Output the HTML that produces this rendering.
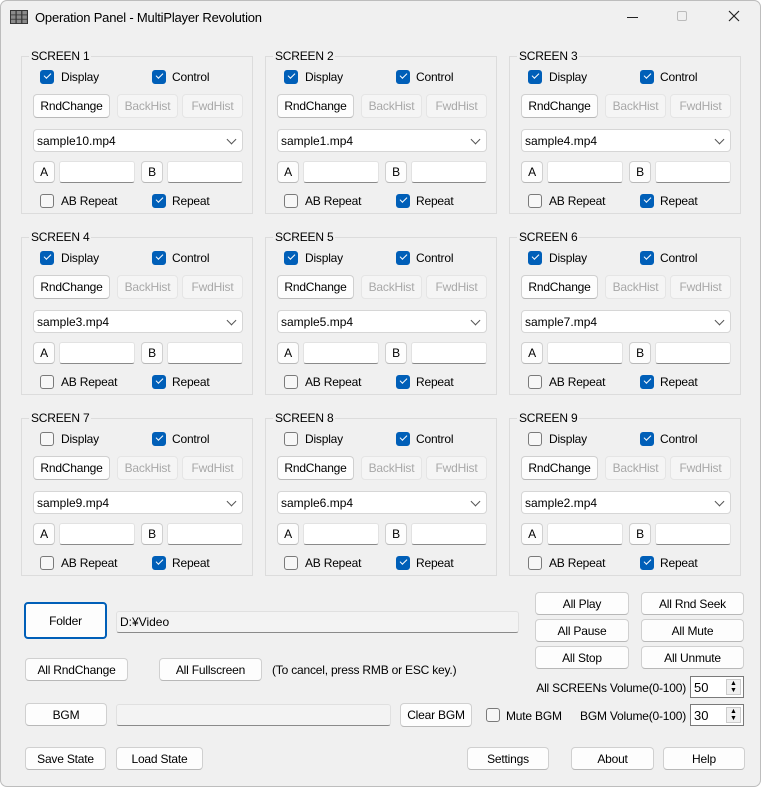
<!DOCTYPE html><html><head><meta charset="utf-8"><style>
*{box-sizing:border-box;margin:0;padding:0}
body{width:761px;height:787px;background:#fff;font-family:"Liberation Sans",sans-serif;font-size:12px;color:#000;overflow:hidden;position:relative}
.win{position:absolute;left:0;top:0;width:761px;height:787px;background:#f0f0f0;border-radius:7px;overflow:hidden;box-shadow:inset 0 0 0 1px #bdbdbd}
.a{position:absolute}
.g{position:absolute;width:232px;height:164px}
.g .bx{position:absolute;left:0;top:6px;width:232px;height:158px;border:1px solid #dcdcdc}
.t{position:absolute;white-space:nowrap;line-height:14px;letter-spacing:-0.2px}
.r{text-align:right}
.cb{position:absolute;width:14px;height:14px;border-radius:3px;border:1px solid #7a7a7a;background:#f7f7f7}
.cb.on{background:#005fb8;border-color:#005fb8}
.cb.on:after{content:"";position:absolute;left:3px;top:2px;width:6px;height:3px;border-left:1.5px solid #fff;border-bottom:1.5px solid #fff;transform:rotate(-45deg)}
.b{position:absolute;background:#fdfdfd;border:1px solid #d0d0d0;border-bottom-color:#b8b8b8;border-radius:4px;text-align:center;white-space:nowrap;display:flex;align-items:center;justify-content:center;letter-spacing:-0.2px}
.b.d{background:#f5f5f5;color:#a8a8a8;border-color:#e5e5e5}
.tb{position:absolute;background:#fff;border:1px solid #e2e2e2;border-bottom:1px solid #8a8a8a;border-radius:3px}
.cmb{position:absolute;background:#fff;border:1px solid #d6d6d6;border-radius:4px;padding-left:3px;display:flex;align-items:center}
.cmb:after{content:"";position:absolute;right:7px;top:6px;width:6px;height:6px;border-right:1px solid #555;border-bottom:1px solid #555;transform:rotate(45deg)}
.ro{position:absolute;background:#f3f3f3;border:1px solid #e0e0e0;border-bottom:1px solid #8a8a8a;border-radius:3px;padding-left:3px;display:flex;align-items:center}
.sp{position:absolute;width:54px;height:22px;background:#fff;border:1px solid #7a7a7a;padding-left:3px;display:flex;align-items:center;font-size:13px}
.sp i{position:absolute;right:2px;top:2px;width:15px;height:16px;border:1px solid #ccc;background:#f0f0f0;font-style:normal;font-size:7px;line-height:7px;text-align:center}
</style></head><body><div class="win">
<svg class="a" style="left:10px;top:10px" width="18" height="14"><rect width="18" height="14" fill="#333"/><g fill="#8b8b8b"><rect x="1" y="1" width="4.5" height="3.5"/><rect x="6.7" y="1" width="4.5" height="3.5"/><rect x="12.4" y="1" width="4.5" height="3.5"/><rect x="1" y="5.3" width="4.5" height="3.5"/><rect x="6.7" y="5.3" width="4.5" height="3.5"/><rect x="12.4" y="5.3" width="4.5" height="3.5"/><rect x="1" y="9.6" width="4.5" height="3.5"/><rect x="6.7" y="9.6" width="4.5" height="3.5"/><rect x="12.4" y="9.6" width="4.5" height="3.5"/></g></svg>
<div class="t" style="left:35px;top:11px;font-size:13px">Operation Panel - MultiPlayer Revolution</div>
<div class="a" style="left:627px;top:17px;width:11px;height:1px;background:#222"></div>
<div class="a" style="left:677px;top:11px;width:10px;height:10px;border:1px solid #bbb;border-radius:2px"></div>
<svg class="a" style="left:728px;top:10px" width="12" height="12"><path d="M1 1L11 11M11 1L1 11" stroke="#222" stroke-width="1.2"/></svg>

<div class="g" style="left:21px;top:50px"><div class="bx"></div><div class="t" style="left:8px;top:-1px;padding:0 2px;background:#f0f0f0">SCREEN 1</div><div class="cb on" style="left:19px;top:20px"></div><div class="t" style="left:40px;top:20px">Display</div><div class="cb on" style="left:131px;top:20px"></div><div class="t" style="left:151px;top:20px">Control</div><div class="b" style="left:12px;top:44px;width:77px;height:24px">RndChange</div><div class="b d" style="left:96px;top:44px;width:61px;height:24px">BackHist</div><div class="b d" style="left:161px;top:44px;width:61px;height:24px">FwdHist</div><div class="cmb" style="left:12px;top:79px;width:210px;height:23px">sample10.mp4</div><div class="b" style="left:12px;top:111px;width:22px;height:22px">A</div><div class="tb" style="left:38px;top:111px;width:76px;height:22px"></div><div class="b" style="left:120px;top:111px;width:22px;height:22px">B</div><div class="tb" style="left:146px;top:111px;width:76px;height:22px"></div><div class="cb" style="left:19px;top:144px"></div><div class="t" style="left:40px;top:144px">AB Repeat</div><div class="cb on" style="left:131px;top:144px"></div><div class="t" style="left:151px;top:144px">Repeat</div></div>
<div class="g" style="left:265px;top:50px"><div class="bx"></div><div class="t" style="left:8px;top:-1px;padding:0 2px;background:#f0f0f0">SCREEN 2</div><div class="cb on" style="left:19px;top:20px"></div><div class="t" style="left:40px;top:20px">Display</div><div class="cb on" style="left:131px;top:20px"></div><div class="t" style="left:151px;top:20px">Control</div><div class="b" style="left:12px;top:44px;width:77px;height:24px">RndChange</div><div class="b d" style="left:96px;top:44px;width:61px;height:24px">BackHist</div><div class="b d" style="left:161px;top:44px;width:61px;height:24px">FwdHist</div><div class="cmb" style="left:12px;top:79px;width:210px;height:23px">sample1.mp4</div><div class="b" style="left:12px;top:111px;width:22px;height:22px">A</div><div class="tb" style="left:38px;top:111px;width:76px;height:22px"></div><div class="b" style="left:120px;top:111px;width:22px;height:22px">B</div><div class="tb" style="left:146px;top:111px;width:76px;height:22px"></div><div class="cb" style="left:19px;top:144px"></div><div class="t" style="left:40px;top:144px">AB Repeat</div><div class="cb on" style="left:131px;top:144px"></div><div class="t" style="left:151px;top:144px">Repeat</div></div>
<div class="g" style="left:509px;top:50px"><div class="bx"></div><div class="t" style="left:8px;top:-1px;padding:0 2px;background:#f0f0f0">SCREEN 3</div><div class="cb on" style="left:19px;top:20px"></div><div class="t" style="left:40px;top:20px">Display</div><div class="cb on" style="left:131px;top:20px"></div><div class="t" style="left:151px;top:20px">Control</div><div class="b" style="left:12px;top:44px;width:77px;height:24px">RndChange</div><div class="b d" style="left:96px;top:44px;width:61px;height:24px">BackHist</div><div class="b d" style="left:161px;top:44px;width:61px;height:24px">FwdHist</div><div class="cmb" style="left:12px;top:79px;width:210px;height:23px">sample4.mp4</div><div class="b" style="left:12px;top:111px;width:22px;height:22px">A</div><div class="tb" style="left:38px;top:111px;width:76px;height:22px"></div><div class="b" style="left:120px;top:111px;width:22px;height:22px">B</div><div class="tb" style="left:146px;top:111px;width:76px;height:22px"></div><div class="cb" style="left:19px;top:144px"></div><div class="t" style="left:40px;top:144px">AB Repeat</div><div class="cb on" style="left:131px;top:144px"></div><div class="t" style="left:151px;top:144px">Repeat</div></div>

<div class="g" style="left:21px;top:231px"><div class="bx"></div><div class="t" style="left:8px;top:-1px;padding:0 2px;background:#f0f0f0">SCREEN 4</div><div class="cb on" style="left:19px;top:20px"></div><div class="t" style="left:40px;top:20px">Display</div><div class="cb on" style="left:131px;top:20px"></div><div class="t" style="left:151px;top:20px">Control</div><div class="b" style="left:12px;top:44px;width:77px;height:24px">RndChange</div><div class="b d" style="left:96px;top:44px;width:61px;height:24px">BackHist</div><div class="b d" style="left:161px;top:44px;width:61px;height:24px">FwdHist</div><div class="cmb" style="left:12px;top:79px;width:210px;height:23px">sample3.mp4</div><div class="b" style="left:12px;top:111px;width:22px;height:22px">A</div><div class="tb" style="left:38px;top:111px;width:76px;height:22px"></div><div class="b" style="left:120px;top:111px;width:22px;height:22px">B</div><div class="tb" style="left:146px;top:111px;width:76px;height:22px"></div><div class="cb" style="left:19px;top:144px"></div><div class="t" style="left:40px;top:144px">AB Repeat</div><div class="cb on" style="left:131px;top:144px"></div><div class="t" style="left:151px;top:144px">Repeat</div></div>
<div class="g" style="left:265px;top:231px"><div class="bx"></div><div class="t" style="left:8px;top:-1px;padding:0 2px;background:#f0f0f0">SCREEN 5</div><div class="cb on" style="left:19px;top:20px"></div><div class="t" style="left:40px;top:20px">Display</div><div class="cb on" style="left:131px;top:20px"></div><div class="t" style="left:151px;top:20px">Control</div><div class="b" style="left:12px;top:44px;width:77px;height:24px">RndChange</div><div class="b d" style="left:96px;top:44px;width:61px;height:24px">BackHist</div><div class="b d" style="left:161px;top:44px;width:61px;height:24px">FwdHist</div><div class="cmb" style="left:12px;top:79px;width:210px;height:23px">sample5.mp4</div><div class="b" style="left:12px;top:111px;width:22px;height:22px">A</div><div class="tb" style="left:38px;top:111px;width:76px;height:22px"></div><div class="b" style="left:120px;top:111px;width:22px;height:22px">B</div><div class="tb" style="left:146px;top:111px;width:76px;height:22px"></div><div class="cb" style="left:19px;top:144px"></div><div class="t" style="left:40px;top:144px">AB Repeat</div><div class="cb on" style="left:131px;top:144px"></div><div class="t" style="left:151px;top:144px">Repeat</div></div>
<div class="g" style="left:509px;top:231px"><div class="bx"></div><div class="t" style="left:8px;top:-1px;padding:0 2px;background:#f0f0f0">SCREEN 6</div><div class="cb on" style="left:19px;top:20px"></div><div class="t" style="left:40px;top:20px">Display</div><div class="cb on" style="left:131px;top:20px"></div><div class="t" style="left:151px;top:20px">Control</div><div class="b" style="left:12px;top:44px;width:77px;height:24px">RndChange</div><div class="b d" style="left:96px;top:44px;width:61px;height:24px">BackHist</div><div class="b d" style="left:161px;top:44px;width:61px;height:24px">FwdHist</div><div class="cmb" style="left:12px;top:79px;width:210px;height:23px">sample7.mp4</div><div class="b" style="left:12px;top:111px;width:22px;height:22px">A</div><div class="tb" style="left:38px;top:111px;width:76px;height:22px"></div><div class="b" style="left:120px;top:111px;width:22px;height:22px">B</div><div class="tb" style="left:146px;top:111px;width:76px;height:22px"></div><div class="cb" style="left:19px;top:144px"></div><div class="t" style="left:40px;top:144px">AB Repeat</div><div class="cb on" style="left:131px;top:144px"></div><div class="t" style="left:151px;top:144px">Repeat</div></div>

<div class="g" style="left:21px;top:412px"><div class="bx"></div><div class="t" style="left:8px;top:-1px;padding:0 2px;background:#f0f0f0">SCREEN 7</div><div class="cb" style="left:19px;top:20px"></div><div class="t" style="left:40px;top:20px">Display</div><div class="cb on" style="left:131px;top:20px"></div><div class="t" style="left:151px;top:20px">Control</div><div class="b" style="left:12px;top:44px;width:77px;height:24px">RndChange</div><div class="b d" style="left:96px;top:44px;width:61px;height:24px">BackHist</div><div class="b d" style="left:161px;top:44px;width:61px;height:24px">FwdHist</div><div class="cmb" style="left:12px;top:79px;width:210px;height:23px">sample9.mp4</div><div class="b" style="left:12px;top:111px;width:22px;height:22px">A</div><div class="tb" style="left:38px;top:111px;width:76px;height:22px"></div><div class="b" style="left:120px;top:111px;width:22px;height:22px">B</div><div class="tb" style="left:146px;top:111px;width:76px;height:22px"></div><div class="cb" style="left:19px;top:144px"></div><div class="t" style="left:40px;top:144px">AB Repeat</div><div class="cb on" style="left:131px;top:144px"></div><div class="t" style="left:151px;top:144px">Repeat</div></div>
<div class="g" style="left:265px;top:412px"><div class="bx"></div><div class="t" style="left:8px;top:-1px;padding:0 2px;background:#f0f0f0">SCREEN 8</div><div class="cb" style="left:19px;top:20px"></div><div class="t" style="left:40px;top:20px">Display</div><div class="cb on" style="left:131px;top:20px"></div><div class="t" style="left:151px;top:20px">Control</div><div class="b" style="left:12px;top:44px;width:77px;height:24px">RndChange</div><div class="b d" style="left:96px;top:44px;width:61px;height:24px">BackHist</div><div class="b d" style="left:161px;top:44px;width:61px;height:24px">FwdHist</div><div class="cmb" style="left:12px;top:79px;width:210px;height:23px">sample6.mp4</div><div class="b" style="left:12px;top:111px;width:22px;height:22px">A</div><div class="tb" style="left:38px;top:111px;width:76px;height:22px"></div><div class="b" style="left:120px;top:111px;width:22px;height:22px">B</div><div class="tb" style="left:146px;top:111px;width:76px;height:22px"></div><div class="cb" style="left:19px;top:144px"></div><div class="t" style="left:40px;top:144px">AB Repeat</div><div class="cb on" style="left:131px;top:144px"></div><div class="t" style="left:151px;top:144px">Repeat</div></div>
<div class="g" style="left:509px;top:412px"><div class="bx"></div><div class="t" style="left:8px;top:-1px;padding:0 2px;background:#f0f0f0">SCREEN 9</div><div class="cb" style="left:19px;top:20px"></div><div class="t" style="left:40px;top:20px">Display</div><div class="cb on" style="left:131px;top:20px"></div><div class="t" style="left:151px;top:20px">Control</div><div class="b" style="left:12px;top:44px;width:77px;height:24px">RndChange</div><div class="b d" style="left:96px;top:44px;width:61px;height:24px">BackHist</div><div class="b d" style="left:161px;top:44px;width:61px;height:24px">FwdHist</div><div class="cmb" style="left:12px;top:79px;width:210px;height:23px">sample2.mp4</div><div class="b" style="left:12px;top:111px;width:22px;height:22px">A</div><div class="tb" style="left:38px;top:111px;width:76px;height:22px"></div><div class="b" style="left:120px;top:111px;width:22px;height:22px">B</div><div class="tb" style="left:146px;top:111px;width:76px;height:22px"></div><div class="cb" style="left:19px;top:144px"></div><div class="t" style="left:40px;top:144px">AB Repeat</div><div class="cb on" style="left:131px;top:144px"></div><div class="t" style="left:151px;top:144px">Repeat</div></div>

<div class="b" style="left:24px;top:602px;width:83px;height:37px;border:2px solid #005fb8">Folder</div>
<div class="ro" style="left:116px;top:611px;width:403px;height:22px;font-family:'Liberation Sans','Noto Sans CJK JP',sans-serif">D:¥Video</div>
<div class="b" style="left:535px;top:592px;width:94px;height:23px">All Play</div>
<div class="b" style="left:641px;top:592px;width:103px;height:23px">All Rnd Seek</div>
<div class="b" style="left:535px;top:619px;width:94px;height:23px">All Pause</div>
<div class="b" style="left:641px;top:619px;width:103px;height:23px">All Mute</div>
<div class="b" style="left:535px;top:646px;width:94px;height:23px">All Stop</div>
<div class="b" style="left:641px;top:646px;width:103px;height:23px">All Unmute</div>
<div class="b" style="left:25px;top:658px;width:103px;height:23px">All RndChange</div>
<div class="b" style="left:159px;top:658px;width:103px;height:23px">All Fullscreen</div>
<div class="t" style="left:272px;top:663px">(To cancel, press RMB or ESC key.)</div>
<div class="t r" style="left:486px;width:200px;top:681px">All SCREENs Volume(0-100)</div>
<div class="sp" style="left:690px;top:676px">50<i>▲<br>▼</i></div>
<div class="b" style="left:25px;top:703px;width:82px;height:23px">BGM</div>
<div class="ro" style="left:116px;top:704px;width:275px;height:22px"></div>
<div class="b" style="left:400px;top:703px;width:72px;height:24px">Clear BGM</div>
<div class="cb" style="left:486px;top:708px"></div>
<div class="t" style="left:506px;top:709px">Mute BGM</div>
<div class="t r" style="left:566px;width:120px;top:709px">BGM Volume(0-100)</div>
<div class="sp" style="left:690px;top:704px">30<i>▲<br>▼</i></div>
<div class="b" style="left:25px;top:747px;width:81px;height:23px">Save State</div>
<div class="b" style="left:116px;top:747px;width:87px;height:23px">Load State</div>
<div class="b" style="left:467px;top:747px;width:82px;height:23px">Settings</div>
<div class="b" style="left:571px;top:747px;width:83px;height:23px">About</div>
<div class="b" style="left:663px;top:747px;width:82px;height:23px">Help</div>
</div></body></html>
